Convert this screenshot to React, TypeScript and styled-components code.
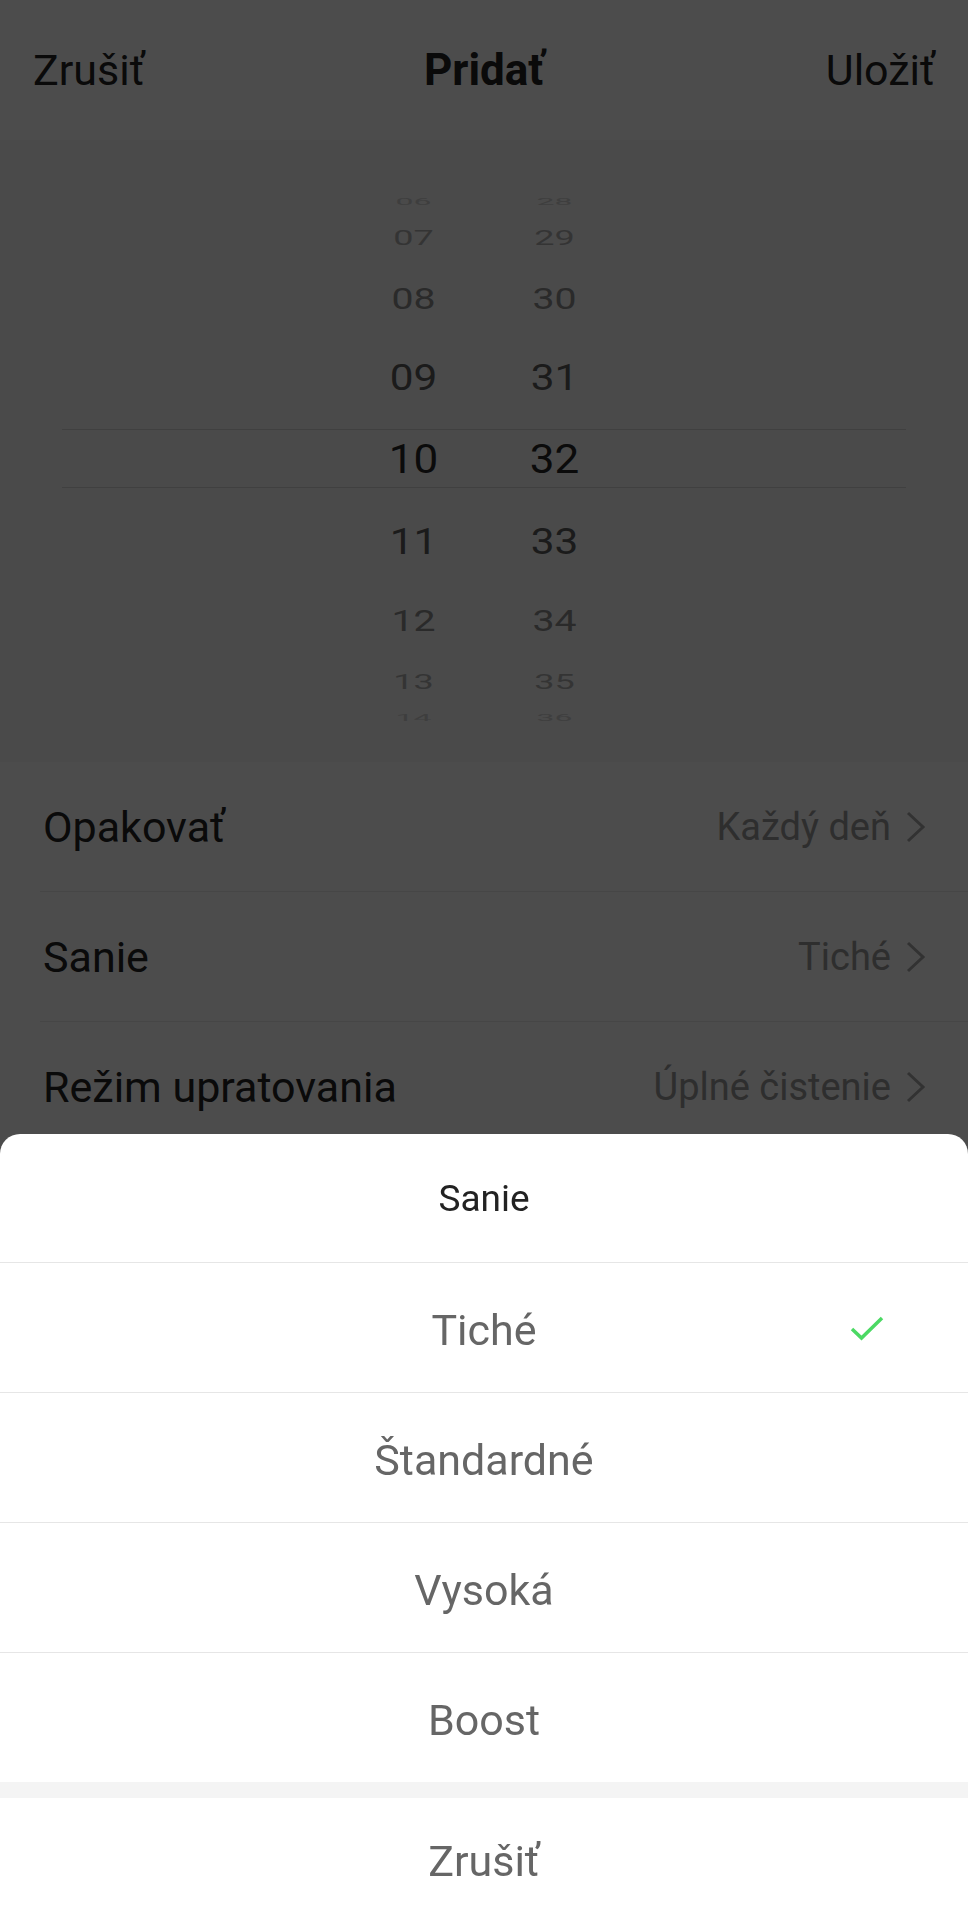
import React from 'react';
import styled, { createGlobalStyle } from 'styled-components';

const GlobalStyle = createGlobalStyle`
  * { box-sizing: border-box; }
  body {
    margin: 0;
    font-family: Roboto, 'Noto Sans', Arial, sans-serif;
    background: #fff;
  }
`;

const Page = styled.div`
  width: 968px;
  min-height: 1920px;
  background: #f8f8f8;
`;

const Header = styled.header`
  height: 140px;
  padding: 0 33px;
  display: grid;
  grid-template-columns: 1fr auto 1fr;
  align-items: center;
  background: #fff;
`;

const HeaderAction = styled.span<{ $end?: boolean }>`
  font-size: 43px;
  color: #222;
  justify-self: ${(p) => (p.$end ? 'end' : 'start')};
`;

const HeaderTitle = styled.h1`
  margin: 0;
  font-size: 44px;
  font-weight: 700;
  color: #222;
`;

const PickerArea = styled.div`
  padding: 50px 0 32px;
`;

const Picker = styled.div`
  position: relative;
  height: 540px;
  overflow: hidden;
  display: flex;
  justify-content: center;
`;

const SelectionBand = styled.div`
  position: absolute;
  top: 239px;
  left: 62px;
  right: 62px;
  height: 59px;
  border-top: 1px solid #d6d6d6;
  border-bottom: 1px solid #d6d6d6;
  pointer-events: none;
`;

const Wheel = styled.div`
  width: 141px;
  display: flex;
  flex-direction: column;
`;

const WheelItem = styled.div<{ $h: number }>`
  height: ${(p) => p.$h}px;
  display: flex;
  align-items: center;
  justify-content: center;
`;

const WheelText = styled.span<{ $sx: number; $sy: number; $c: string }>`
  display: inline-block;
  font-size: 40px;
  line-height: 1;
  color: ${(p) => p.$c};
  transform: scale(${(p) => p.$sx}, ${(p) => p.$sy});
`;

const List = styled.div`
  background: #fff;
`;

const Row = styled.div`
  height: 130px;
  margin-left: 40px;
  padding: 0 41px 0 3px;
  display: flex;
  align-items: center;
  justify-content: space-between;
  border-bottom: 1px solid #ececec;
`;

const RowLabel = styled.span`
  font-size: 43px;
  color: #222;
`;

const RowValue = styled.span`
  display: flex;
  align-items: center;
  gap: 14px;
  font-size: 38px;
  color: #9a9a9a;
`;

const Backdrop = styled.div`
  position: fixed;
  inset: 0;
  background: rgba(0, 0, 0, 0.7);
`;

const Sheet = styled.div`
  position: fixed;
  left: 0;
  right: 0;
  bottom: 0;
  background: #fff;
  border-radius: 20px 20px 0 0;
  overflow: hidden;
`;

const SheetTitle = styled.div`
  height: 128px;
  display: flex;
  align-items: center;
  justify-content: center;
  font-size: 37px;
  color: #222;
`;

const Option = styled.div`
  height: 130px;
  padding-top: 4px;
  border-top: 1px solid #e6e6e6;
  display: grid;
  grid-template-columns: 1fr auto 1fr;
  align-items: center;
  font-size: 43px;
  color: #666;
`;

const OptionText = styled.span`
  grid-column: 2;
`;

const Check = styled.svg`
  grid-column: 3;
  justify-self: end;
  margin-right: 83px;
  margin-bottom: 4px;
`;

const SheetGap = styled.div`
  height: 16px;
  background: #f4f4f4;
`;

const CancelButton = styled.div`
  height: 122px;
  padding-top: 4px;
  display: flex;
  align-items: center;
  justify-content: center;
  font-size: 43px;
  color: #666;
`;

const wheelRows = [
  { h: 24, sx: 0.8, sy: 0.22, c: '#cfcfcf' },
  { h: 48, sx: 0.9, sy: 0.5, c: '#b0b0b0' },
  { h: 74, sx: 0.98, sy: 0.74, c: '#8c8c8c' },
  { h: 84, sx: 1.06, sy: 0.94, c: '#5c5c5c' },
  { h: 80, sx: 1.1, sy: 1, c: '#262626' },
  { h: 84, sx: 1.06, sy: 0.94, c: '#5c5c5c' },
  { h: 74, sx: 0.98, sy: 0.74, c: '#8c8c8c' },
  { h: 48, sx: 0.9, sy: 0.5, c: '#b0b0b0' },
  { h: 24, sx: 0.8, sy: 0.22, c: '#cfcfcf' },
];

const hours = ['06', '07', '08', '09', '10', '11', '12', '13', '14'];
const minutes = ['28', '29', '30', '31', '32', '33', '34', '35', '36'];

const settings = [
  { label: 'Opakovať', value: 'Každý deň' },
  { label: 'Sanie', value: 'Tiché' },
  { label: 'Režim upratovania', value: 'Úplné čistenie' },
];

const options = ['Tiché', 'Štandardné', 'Vysoká', 'Boost'];

const Chevron = () => (
  <svg width="22" height="32" viewBox="0 0 22 32">
    <path d="M3 2 L18 16 L3 30" fill="none" stroke="#a8a8a8" strokeWidth="3" />
  </svg>
);

const WheelColumn: React.FC<{ values: string[] }> = ({ values }) => (
  <Wheel>
    {values.map((v, i) => (
      <WheelItem key={v} $h={wheelRows[i].h}>
        <WheelText $sx={wheelRows[i].sx} $sy={wheelRows[i].sy} $c={wheelRows[i].c}>
          {v}
        </WheelText>
      </WheelItem>
    ))}
  </Wheel>
);

const App: React.FC = () => {
  return (
    <>
      <GlobalStyle />
      <Page>
        <Header>
          <HeaderAction>Zrušiť</HeaderAction>
          <HeaderTitle>Pridať</HeaderTitle>
          <HeaderAction $end>Uložiť</HeaderAction>
        </Header>
        <PickerArea>
          <Picker>
            <WheelColumn values={hours} />
            <WheelColumn values={minutes} />
            <SelectionBand />
          </Picker>
        </PickerArea>
        <List>
          {settings.map((s) => (
            <Row key={s.label}>
              <RowLabel>{s.label}</RowLabel>
              <RowValue>
                {s.value}
                <Chevron />
              </RowValue>
            </Row>
          ))}
        </List>
      </Page>
      <Backdrop />
      <Sheet>
        <SheetTitle>Sanie</SheetTitle>
        {options.map((o, i) => (
          <Option key={o}>
            <OptionText>{o}</OptionText>
            {i === 0 && (
              <Check width="36" height="28" viewBox="0 0 36 28">
                <path d="M3 15 L12.5 24 L33 4" fill="none" stroke="#4cd964" strokeWidth="3.5" />
              </Check>
            )}
          </Option>
        ))}
        <SheetGap />
        <CancelButton>Zrušiť</CancelButton>
      </Sheet>
    </>
  );
};

export default App;
